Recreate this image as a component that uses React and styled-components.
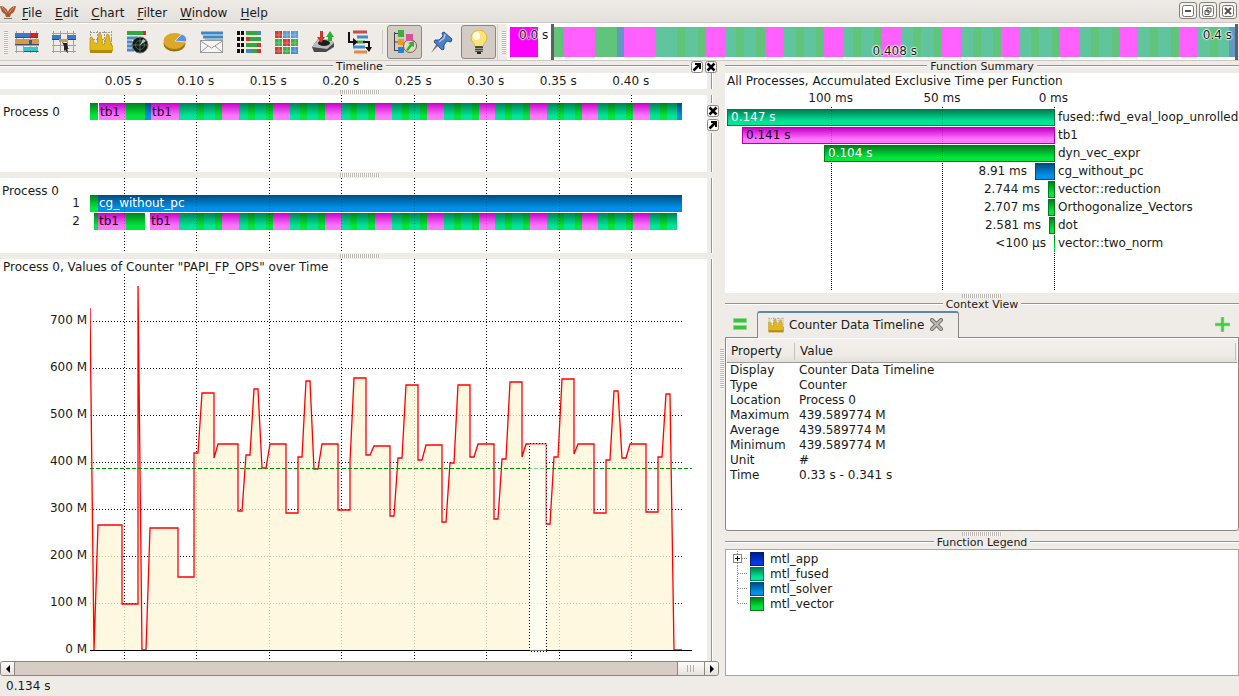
import React from 'react';
import styled, { createGlobalStyle, css } from 'styled-components';

const GlobalStyle = createGlobalStyle`
  *, *::before, *::after { box-sizing: border-box; }
  body {
    margin: 0;
    background: #efebe7;
    color: #1a1a1a;
    font-family: "DejaVu Sans", Verdana, sans-serif;
    font-size: 12px;
    line-height: 14px;
  }
  h2, ul, table { margin: 0; padding: 0; font: inherit; }
  ul { list-style: none; }
  button { font: inherit; color: inherit; margin: 0; padding: 0; border: 0; background: none; }
`;

/* ---------- data ---------- */

const fills = {
  green: 'linear-gradient(#00801a, #00e63c 75%)',
  teal: 'linear-gradient(#008055, #00e696 75%)',
  pink: 'linear-gradient(#c800c8, #ff78ff 75%)',
  blue: 'linear-gradient(#004d80, #0090ea 75%)',
  navy: 'linear-gradient(#001e80, #0038ea 75%)',
};

const edges = { green: '#007c1c', teal: '#007a52', pink: '#b400b4', blue: '#004a7c', navy: '#001c78' };

const pale = { green: '#60c47a', teal: '#60c49f', pink: '#ff60ff', blue: '#609ac4', gap: '#60c47a' };

// One solver iteration: a tb1 block followed by vector kernels of alternating kind.
const loop = [
  [17, 9], [17, 10], [16, 9], [17, 10], [17, 10], [16, 10], [17, 10], [16, 10],
].flatMap(([tb, kernel]) => [['pink', tb], ['teal', kernel], ['green', 7], ['teal', 11], ['green', 7]]);

const iterations = [
  ['teal', 18], ['green', 7], ['teal', 11], ['green', 7],
  ...loop,
  ['pink', 17], ['teal', 10], ['green', 7], ['teal', 10],
];

const processRow = [
  ['green', 8], ['gap', 1], ['pink', 27, 'tb1'], ['green', 19], ['blue', 6], ['pink', 28, 'tb1'],
  ...iterations, ['blue', 5],
];
const levelOne = [['green', 8], ['blue', 584, 'cg_without_pc', true]];
const levelTwo = [
  ['gap', 4], ['green', 4], ['pink', 28, 'tb1'], ['green', 19], ['gap', 5], ['pink', 29, 'tb1'],
  ...iterations, ['gap', 5],
];

const ticks = ['0.05 s', '0.10 s', '0.15 s', '0.20 s', '0.25 s', '0.30 s', '0.35 s', '0.40 s'];
const tickX = [124, 196, 269, 341, 414, 486, 559, 631];
const counterTicks = ['700 M', '600 M', '500 M', '400 M', '300 M', '200 M', '100 M', '0 M'];

const counter =
  '90,308 92,480 94,650 98,525 122,525 122,604 138,604 138,286 142,650 146,650 150,528 178,528 178,577 194,577 194,453 198,453 202,393 214,393 214,458 218,444 238,444 238,511 242,511 246,455 250,455 254,389 258,389 262,468 266,468 270,444 286,444 286,513 298,513 298,457 302,457 306,381 310,381 314,469 318,469 322,444 338,444 338,510 350,510 350,462 354,378 366,378 366,455 370,455 374,446 390,446 390,516 394,516 398,458 402,458 406,385 418,385 418,460 422,460 426,445 442,445 442,522 446,522 450,463 454,463 458,385 470,385 470,457 474,457 478,444 494,444 494,519 498,519 502,459 506,459 510,382 522,382 522,457 526,444 546,444 546,524 550,524 554,457 558,457 562,379 574,379 574,454 578,444 594,444 594,513 606,513 606,460 610,460 614,391 618,391 622,458 626,458 630,444 646,444 646,512 658,512 658,457 662,457 666,394 670,394 674,650 682,650';

const functions = [
  { name: 'fused::fwd_eval_loop_unrolled', value: '0.147 s', span: 328, color: 'teal', light: true },
  { name: 'tb1', value: '0.141 s', span: 313, color: 'pink' },
  { name: 'dyn_vec_expr', value: '0.104 s', span: 231, color: 'green', light: true },
  { name: 'cg_without_pc', value: '8.91 ms', span: 20, color: 'blue' },
  { name: 'vector::reduction', value: '2.744 ms', span: 7, color: 'green' },
  { name: 'Orthogonalize_Vectors', value: '2.707 ms', span: 7, color: 'green' },
  { name: 'dot', value: '2.581 ms', span: 6, color: 'green' },
  { name: 'vector::two_norm', value: '<100 µs', span: 1, color: 'green' },
];

const properties = [
  ['Display', 'Counter Data Timeline'],
  ['Type', 'Counter'],
  ['Location', 'Process 0'],
  ['Maximum', '439.589774 M'],
  ['Average', '439.589774 M'],
  ['Minimum', '439.589774 M'],
  ['Unit', '#'],
  ['Time', '0.33 s - 0.341 s'],
];

const legend = [
  ['mtl_app', 'navy'],
  ['mtl_fused', 'teal'],
  ['mtl_solver', 'blue'],
  ['mtl_vector', 'green'],
];

/* ---------- window frame ---------- */

const Window = styled.div`
  min-height: 100vh;
  display: flex;
  flex-direction: column;
`;

const MenuBar = styled.nav`
  height: 23px;
  display: flex;
  align-items: center;
  padding-right: 2px;
  border-bottom: 1px solid #cdc9c5;
  background: linear-gradient(#efebe7, #e4e0db);
`;

const Logo = styled.svg`
  width: 16px;
  height: 16px;
  flex: none;
`;

const MenuItem = styled.button`
  padding: 4px 0 0;
  margin-left: ${(p) => (p.$first ? 6 : 13)}px;
`;

const Mnemonic = styled.span`
  text-decoration: underline;
  text-underline-offset: 2px;
`;

const WindowButtons = styled.div`
  display: flex;
  gap: 2px;
  align-self: flex-start;
  margin: 2px 0 0 auto;
`;

const WindowButton = styled.button`
  width: 18px;
  height: 17px;
  display: grid;
  place-items: center;
  border: 1px solid #85817c;
  border-radius: 3px;
  background: #f4f1ee;
`;

const ToolBar = styled.div`
  height: 38px;
  display: flex;
  border-top: 1px solid #fff;
  border-bottom: 1px solid #cdc9c5;
`;

const ToolGroup = styled.div`
  display: flex;
  align-items: center;
  padding-left: 4px;
  border-right: ${(p) => (p.$last ? 0 : 1)}px solid #d5d1cc;
`;

const Handle = styled.span`
  width: 4px;
  height: 23px;
  flex: none;
  background: repeating-linear-gradient(#b9b5b0 0 1px, #fbfaf9 1px 2px);
`;

const Tool = styled.button`
  width: 35px;
  height: 34px;
  margin: 0 1px;
  display: grid;
  place-items: center;
  border-radius: 3px;
  ${(p) => p['aria-pressed'] && css`
    background: #d2ccc5;
    border: 1px solid #8c8782;
  `}
  svg { width: 24px; height: 24px; }
`;

const ToolSeparator = styled.span`
  width: 1px;
  height: 24px;
  margin: 0 3px 0 4px;
  background: #cfcbc6;
`;

const Main = styled.main`
  flex: 1;
  display: grid;
  grid-template-columns: minmax(0, 719fr) 6px minmax(0, 514fr);
`;

const Column = styled.div`
  display: flex;
  flex-direction: column;
  min-width: 0;
`;

const StatusBar = styled.footer`
  height: 20px;
  padding: 3px 6px;
`;

const Grip = styled.div`
  ${(p) => (p.$vertical ? css`
    width: 4px;
    height: 40px;
    background: repeating-linear-gradient(#bcb8b3 0 1px, #fbfaf9 1px 2px);
  ` : css`
    width: 40px;
    height: 4px;
    background: repeating-linear-gradient(90deg, #bcb8b3 0 1px, #fbfaf9 1px 2px);
  `)}
`;

const Splitter = styled.div`
  height: ${(p) => (p.$vertical ? 'auto' : '6px')};
  display: flex;
  align-items: center;
  justify-content: center;
`;

/* ---------- dock titles ---------- */

const TitleRow = styled.div`
  height: 12px;
  flex: none;
  display: grid;
  grid-template-columns: 1fr auto 1fr;
  column-gap: 3px;
`;

const Title = styled.h2`
  font-size: 11px;
  line-height: 11px;
`;

const Rule = styled.div`
  flex: 1;
  height: 2px;
  margin-top: 4px;
  background: linear-gradient(#96928e 50%, #fff 50%);
`;

const TitleEnd = styled.div`
  display: flex;
  gap: 2px;
  padding-right: ${(p) => (p.$tools ? 2 : 0)}px;
`;

const DockButton = styled.button`
  width: 12px;
  height: 12px;
  flex: none;
  display: block;
  svg { display: block; }
`;

/* ---------- timeline panels ---------- */

const PanelRow = styled.div`
  display: grid;
  grid-template-columns: minmax(0, 1fr) 12px;
  flex: ${(p) => (p.$grow ? 1 : 'none')};
  min-height: ${(p) => p.$height}px;
`;

const Panel = styled.section`
  position: relative;
  background: #fff;
`;

const Side = styled.div`
  display: flex;
  flex-direction: column;
  gap: 2px;
`;

const SideRule = styled.div`
  width: 2px;
  margin-left: 4px;
  flex: ${(p) => (p.$short ? '0 0 8px' : 1)};
  background: linear-gradient(90deg, #96928e 50%, #fff 50%);
`;

const Axis = styled.div`
  display: flex;
  padding: 1px 40px 0 87px;
  span { flex: 1; text-align: center; }
`;

const TrackGrid = styled.svg`
  position: absolute;
  top: 0;
  left: 90px;
  width: calc(100% - 115px);
  height: 100%;
  opacity: ${(p) => (p.$over ? 0.2 : 1)};
  pointer-events: none;
`;

const Lane = styled.div`
  position: relative;
  display: flex;
  height: 17px;
  margin: 0 25px 1px 0;
  line-height: ${(p) => (p.$low ? 19 : 17)}px;
`;

const LaneLabel = styled.div`
  width: 90px;
  flex: none;
  padding: 0 10px 0 3px;
  text-align: ${(p) => (p.$right ? 'right' : 'left')};
`;

const PanelPad = styled.div`
  padding-top: 8px;
`;

const LevelHeading = styled.div`
  height: 17px;
  padding: 6px 0 0 2px;
`;

const Track = styled.div`
  flex: 1;
  min-width: 0;
  display: flex;
`;

const Segment = styled.div`
  flex: ${(p) => p.$span} 1 0;
  min-width: 0;
  text-indent: ${(p) => (p.$text ? 1 : 0)}px;
  background: ${(p) => fills[p.$color] || 'none'};
  color: ${(p) => (p.$light ? '#fff' : '#1a001a')};
  white-space: nowrap;
`;

/* ---------- counter chart ---------- */

const ChartBody = styled.div`
  display: grid;
  grid-template-columns: 90px minmax(0, 1fr);
`;

const ChartTitle = styled.div`
  grid-area: 1 / 1 / 2 / 3;
  justify-self: start;
  align-self: start;
  z-index: 1;
  padding: 1px 0 0 3px;
  background: #fff;
`;

const ChartLabels = styled.div`
  grid-area: 1 / 1;
  padding: 38px 3px 0 0;
  line-height: 47px;
  text-align: right;
  height: 402px;
  overflow: hidden;
`;

const Plot = styled.svg`
  grid-area: 1 / 2;
  display: block;
  width: calc(100% - 15px);
  height: 402px;
`;

/* ---------- scroll bar ---------- */

const ScrollBar = styled.div`
  height: 15px;
  display: flex;
  border: 1px solid #8c8681;
  border-radius: 3px;
  background: #d7cdc4;
  overflow: hidden;
`;

const ScrollButton = styled.button`
  width: 14px;
  display: grid;
  place-items: center;
  background: linear-gradient(#fdfcfb, #e6e2dd);
  border: solid #8c8681;
  border-width: ${(p) => (p.$end ? '0 0 0 1px' : '0 1px 0 0')};
`;

const ScrollThumb = styled.div`
  width: 27px;
  margin-left: auto;
  display: grid;
  place-items: center;
  background: linear-gradient(#fdfcfb, #e6e2dd);
  border-left: 1px solid #8c8681;
`;

/* ---------- overview strip ---------- */

const Overview = styled.div`
  position: relative;
  flex: 1;
  display: flex;
  margin: 0 1px 0 1px;
  padding-left: 3px;
  background: #fff;
`;

const OverviewHead = styled.div`
  width: 28px;
  margin: 3px 13px 3px 0;
  background: #f0f;
`;

const OverviewEdge = styled.div`
  width: 3px;
  background: #606060;
`;

const OverviewTrack = styled.div`
  flex: 1;
  display: flex;
  margin: 3px 0;
`;

const OverviewSegment = styled.div`
  flex: ${(p) => p.$span} 1 0;
  background: ${(p) => pale[p.$color]};
`;

const OverviewLabel = styled.span`
  position: absolute;
  ${(p) => p.$place}
  text-shadow: 0 0 2px #fff, 1px 0 1px #ffffffb0, -1px 0 1px #ffffffb0, 0 1px 1px #ffffffb0, 0 -1px 1px #ffffffb0;
`;

/* ---------- function summary ---------- */

const Summary = styled.section`
  position: relative;
  min-height: 220px;
  padding-top: 1px;
  background: #fff;
`;

const SummaryTitle = styled.div`
  padding-left: 2px;
`;

const SummaryAxis = styled.div`
  display: flex;
  margin: 3px 130px 4px 50px;
  span { flex: 1; text-align: center; }
`;

const SummaryGrid = styled.svg`
  position: absolute;
  top: 34px;
  left: 0;
  width: calc(100% - 184px);
  height: 184px;
  opacity: ${(p) => (p.$over ? 0.2 : 1)};
  pointer-events: none;
`;

const FunctionRow = styled.li`
  position: relative;
  display: grid;
  grid-template-columns: minmax(0, 1fr) 184px;
  height: 17px;
  margin-bottom: 1px;
  line-height: 16px;
  white-space: nowrap;
`;

const FunctionTrack = styled.div`
  display: flex;
  justify-content: flex-end;
`;

const FunctionBar = styled.div`
  width: ${(p) => (p.$span / 330) * 100}%;
  padding-left: ${(p) => (p.$span > 100 ? 3 : 0)}px;
  line-height: 14px;
  border: ${(p) => (p.$span > 1 ? 1 : 0)}px solid ${(p) => edges[p.$color]};
  background: ${(p) => fills[p.$color]};
  color: ${(p) => (p.$light ? '#fff' : '#1a001a')};
`;

const FunctionValue = styled.span`
  padding-right: 8px;
`;

const FunctionName = styled.span`
  padding-left: 3px;
`;

/* ---------- context view ---------- */

const TabRow = styled.div`
  height: 27px;
  display: flex;
  margin-bottom: -1px;
`;

const TabTool = styled.button`
  width: 32px;
  display: flex;
  align-items: flex-start;
  padding: 6px 0 0 8px;
  svg { display: block; }
  ${(p) => p.$end && css`
    margin-left: auto;
    width: 24px;
    padding-left: 0;
  `}
`;

const Tab = styled.div`
  position: relative;
  width: 202px;
  display: flex;
  align-items: center;
  padding: 0 0 2px 10px;
  border: 1px solid #8c8681;
  border-top: 2px solid #5c88b0;
  border-bottom: 0;
  border-radius: 3px 3px 0 0;
  background: #efebe7;
  button { display: flex; }
`;

const TabLabel = styled.span`
  margin: 0 6px 0 5px;
`;

const ContextBox = styled.div`
  height: 194px;
  padding: 1px;
  border: 1px solid #8c8681;
  border-radius: 0 0 3px 3px;
  background: #fff;
`;

const PropertyTable = styled.table`
  width: 100%;
  border-collapse: separate;
  border-spacing: 0;
  table-layout: fixed;
  th {
    height: 24px;
    padding: 0 0 0 4px;
    font-weight: normal;
    text-align: left;
    border-bottom: 1px solid #9f9b96;
    background: linear-gradient(#f2efec, #efebe7 70%, #e2deda);
  }
  th span {
    display: block;
    margin: 3px 1px 2px 0;
    line-height: 17px;
    border-right: 1px solid #c4c0bb;
  }
  th:first-child { width: 69px; }
  td { height: 15px; line-height: 15px; padding: 0 0 0 3px; }
`;

/* ---------- legend ---------- */

const LegendBox = styled.ul`
  flex: 1;
  padding: 1px 0 0 7px;
  border: 1px solid #aaa6a1;
  background: #fff;
`;

const LegendRow = styled.li`
  height: 15px;
  display: flex;
  align-items: center;
  svg { display: block; flex: none; }
`;

const Swatch = styled.span`
  width: 14px;
  height: 14px;
  margin: 0 6px 0 3px;
  border: 1px solid ${(p) => edges[p.$color]};
  background: ${(p) => fills[p.$color]};
`;

/* ---------- icons ---------- */

const GridBack = () => (
  <path d="M1.5 1v22M8.5 1v22M15.5 1v22M21.5 1v22M0 3.5h24M0 9.5h24M0 15.5h24M0 21.5h24" stroke="#a2a2a2" fill="none" />
);

const TimelineIcon = () => (
  <svg viewBox="0 0 24 24">
    <GridBack />
    <rect x="0" y="3" width="15" height="4" fill="#3f78c8" /><rect x="15" y="3" width="8" height="4" fill="#d8202c" />
    <rect x="0" y="10" width="24" height="4" fill="#d89a48" /><rect x="14" y="10" width="3" height="4" fill="#2c5fa8" />
    <rect x="9" y="17" width="14" height="4" fill="#35c6c9" />
    <path d="M0 7.5h23M0 14.5h24M9 21.5h14" stroke="#39506e" />
  </svg>
);

const ProcessIcon = () => (
  <svg viewBox="0 0 24 24">
    <GridBack />
    <rect x="0" y="5" width="9" height="4" fill="#3f78c8" /><rect x="15" y="5" width="9" height="4" fill="#3f78c8" />
    <path d="M0 9.5h9M15 9.500h9" stroke="#294a7c" />
    <rect x="7" y="9" width="9" height="3" fill="#d89a48" />
    <path d="M10 12l2 1 3 0 1 5 1 1-2 0 1 4-3-3-1 1v-5z" fill="#222" />
  </svg>
);

const CounterShape = () => (
  <>
    <path d="M1.5 1v22M8.5 1v22M15.5 1v22M22.5 1v22M1 2.5h22M1 9.5h22M1 15.5h22M1 21.5h22" stroke="#999" fill="none" strokeDasharray="2 1" />
    <path d="M1 21V8l2-1 2 5 3 2 2-11 2 1 2 10 1 1 3-11 2 1 2 10 2 1v5z" fill="#e3b81b" stroke="#b8900c" strokeWidth=".7" />
    <path d="M1 20h22v3H1z" fill="#b58a08" />
  </>
);

const CounterIcon = () => <svg viewBox="0 0 24 24"><CounterShape /></svg>;

const RadarIcon = () => (
  <svg viewBox="0 0 24 24">
    <rect x="1" y="1" width="19" height="4" fill="#2fa83c" /><rect x="17" y="1" width="3" height="4" fill="#c33" />
    <path d="M1 8h11M1 12h5M1 16h5M1 20h7" stroke="#4b86c6" strokeWidth="3" />
    <circle cx="14" cy="15" r="8" fill="#101a14" stroke="#777" />
    <circle cx="14" cy="15" r="4.5" fill="none" stroke="#5d7767" strokeWidth=".7" />
    <path d="M14 15L20 9M14 8v14M7 15h14" stroke="#6d8a78" strokeWidth=".7" /><path d="M14 15l3-6 3 2z" fill="#d5e6da" opacity=".8" />
  </svg>
);

const PieIcon = () => (
  <svg viewBox="0 0 24 24">
    <ellipse cx="11.500" cy="13.500" rx="11" ry="8" fill="#9b7510" />
    <ellipse cx="11.500" cy="11" rx="11" ry="8" fill="#dca82a" />
    <path d="M12 11L19 4a9 7 0 0 1 4 8z" fill="#5c8ff0" stroke="#e8eefc" strokeWidth=".8" />
  </svg>
);

const MailIcon = () => (
  <svg viewBox="0 0 24 24">
    <path d="M1 3h22M3 7h20M5 11h18M12 15h11" stroke="#3a8ac8" strokeWidth="3" />
    <rect x=".5" y="10.500" width="22" height="12" fill="#f5f5f3" stroke="#999" />
    <path d="M.500 11l11 7 11-7M1 22l7-6M22 22l-7-6" fill="none" stroke="#999" />
  </svg>
);

const CommIcon = () => (
  <svg viewBox="0 0 24 24">
    {[1, 7, 13, 19].map((y, i) => (
      <g key={y}>
        <rect x="0" y={y} width="3" height="4" fill="#111" /><rect x="4" y={y} width="3" height="4" fill="#111" />
        <rect x="9" y={y} width="15" height="4" fill="#35a53f" />
        <rect x={i === 1 ? 9 : 20} y={y} width="4" height="4" fill={i === 0 ? '#4b86c6' : '#cc3a33'} />
        {i === 3 && <rect x="9" y={y} width="5" height="4" fill="#4b86c6" />}
      </g>
    ))}
  </svg>
);

const MatrixIcon = () => {
  const cells = ['#cf3c36', '#5b9bd0', '#5b9bd0', '#3eae49', '#cf3c36', '#3eae49', '#cf3c36', '#3eae49', '#4a8cd0'];
  return (
    <svg viewBox="0 0 24 24">
      {cells.map((c, i) => (
        <rect key={i} x={1 + (i % 3) * 8} y={1 + Math.floor(i / 3) * 8} width="7" height="7" fill={c} />
      ))}
      <path d="M1 5h22M1 13h22M1 21h22M5 1v22M13 1v22M21 1v22" stroke="#fff" opacity=".3" />
    </svg>
  );
};

const DiskIcon = () => (
  <svg viewBox="0 0 24 24">
    <path d="M1 17L7 9h12l4 4v4l-8 5H3z" fill="#4a4a4a" /><path d="M1 17l6-8h12l4 4-7 6z" fill="#bcbcbc" />
    <ellipse cx="13" cy="13" rx="6" ry="3" fill="#1e1e1e" />
    <path d="M9 1v6H6l4 6 4-6h-2V1z" fill="#c9392f" /><path d="M17 11V7h-2l4-6 4 6h-2v4z" fill="#2fae3c" />
  </svg>
);

const FilterIcon = () => (
  <svg viewBox="0 0 24 24">
    <path d="M5 2h14" stroke="#c94b45" strokeWidth="3" /><path d="M9 7h11" stroke="#3f8ad0" strokeWidth="3" />
    <path d="M9 12h8" stroke="#3fae49" strokeWidth="3" /><path d="M5 17h12" stroke="#3f8ad0" strokeWidth="3" /><path d="M6 22h13" stroke="#e08a4a" strokeWidth="3" />
    <path d="M1 2v10h5M15 12h6v7" fill="none" stroke="#111" strokeWidth="2" /><path d="M5 8l5 4-5 4zM17 17h7l-3 5z" fill="#111" />
  </svg>
);

const TreeIcon = () => (
  <svg viewBox="0 0 24 24">
    <path d="M1.500 2v19M1 3.500h5M1 12h5M1 20.500h5" stroke="#444" fill="none" />
    <rect x="5" y="0" width="6" height="7" fill="#3cae3c" /><rect x="5" y="9" width="6" height="6" fill="#f09a20" /><rect x="5" y="17" width="6" height="6" fill="#2f7fd0" />
    <circle cx="17" cy="16" r="6.500" fill="#e4dcc0" stroke="#6d654f" />
    <rect x="13" y="4" width="7" height="7" fill="#d850a0" />
    <path d="M13 20l4-6-2-1 6-2 0 6-2-1-4 5z" fill="#2fae3c" />
  </svg>
);

const PinIcon = () => (
  <svg viewBox="0 0 24 24">
    <path d="M9 15l-8 8 6-10z" fill="#777" />
    <path d="M14 2l8 7-1 3-4-1-3 4 0 4-2 1-8-8 1-2 4 0 4-4-1-3z" fill="#4d7fc4" stroke="#24487e" strokeWidth=".9" />
    <path d="M15 4l-1 4-5 4" stroke="#a9c6ee" fill="none" strokeWidth="1.500" />
  </svg>
);

const BulbIcon = () => (
  <svg viewBox="0 0 24 24">
    <path d="M12 0a8 8 0 0 1 8 8c0 4-4 5-4 9H8c0-4-4-5-4-9a8 8 0 0 1 8-8z" fill="#fbe37c" stroke="#d9b640" />
    <ellipse cx="9.500" cy="6" rx="3.500" ry="4" fill="#fffbe0" />
    <rect x="8" y="16" width="8" height="6" rx="1" fill="#4a4a4a" /><path d="M8 18.500h8M8 20.500h8" stroke="#999" /><path d="M10 22h4v2h-4z" fill="#222" />
  </svg>
);

const tools = [
  ['Master timeline', TimelineIcon], ['Process timeline', ProcessIcon], ['Counter timeline', CounterIcon],
  ['Performance radar', RadarIcon], ['Function summary', PieIcon], ['Message summary', MailIcon],
  ['Process summary', CommIcon], ['Communication matrix', MatrixIcon], ['I/O summary', DiskIcon], ['Call tree', FilterIcon],
];

const Close = () => (
  <DockButton aria-label="Close">
    <svg width="12" height="12" viewBox="0 0 12 12">
      <rect x=".5" y=".5" width="11" height="11" rx="2" fill="#fff" stroke="#8c8681" />
      <path d="M2.500 2.500l7 7M9.500 2.500l-7 7" stroke="#000" strokeWidth="2.500" />
    </svg>
  </DockButton>
);

const Detach = () => (
  <DockButton aria-label="Detach">
    <svg width="12" height="12" viewBox="0 0 12 12">
      <rect x=".5" y=".5" width="11" height="11" rx="2" fill="#fff" stroke="#8c8681" />
      <path d="M2.500 9.500L8 4" stroke="#000" strokeWidth="2.500" /><path d="M4 2h6v6H8V4H4z" fill="#000" />
    </svg>
  </DockButton>
);

/* ---------- composed parts ---------- */

const DockTitle = ({ children, tools: withTools }) => (
  <TitleRow>
    <Rule />
    <Title>{children}</Title>
    <TitleEnd $tools={withTools}>
      <Rule />
      {withTools && <><Detach /><Close /></>}
    </TitleEnd>
  </TitleRow>
);

const Divider = () => <Splitter><Grip /></Splitter>;

const TimeGrid = ({ over }) => (
  <TrackGrid $over={over} aria-hidden="true">
    {tickX.map((x) => {
      const at = `${((x - 89.5) / 592) * 100}%`;
      return <line key={x} x1={at} x2={at} y1="0" y2="100%" stroke="#000" strokeDasharray="1 2" shapeRendering="crispEdges" />;
    })}
  </TrackGrid>
);

const Segments = ({ row }) => (
  <Track>
    {row.map(([color, span, text, light], i) => (
      <Segment key={i} $color={color} $span={span} $text={text} $light={light}>{text}</Segment>
    ))}
  </Track>
);

const ValueGrid = ({ over }) => (
  <SummaryGrid $over={over} aria-hidden="true">
    {[106.5, 217.5, 329.5].map((x) => (
      <line key={x} x1={`${x / 3.3}%`} x2={`${x / 3.3}%`} y1="0" y2="100%" stroke="#000" strokeDasharray="1 1" shapeRendering="crispEdges" />
    ))}
  </SummaryGrid>
);

const CounterPlot = () => (
  <Plot viewBox="90 259 602 402" preserveAspectRatio="none" role="img" aria-label="PAPI_FP_OPS over time">
    <g stroke="#000" strokeDasharray="1 2" shapeRendering="crispEdges">
      {tickX.map((x) => <line key={x} x1={x + 0.5} x2={x + 0.5} y1="259" y2="660" />)}
      {[321, 368, 415, 462, 509, 556, 603].map((y) => <line key={y} x1="90" x2="682" y1={y + 0.5} y2={y + 0.5} />)}
    </g>
    <polygon points={`90,650 ${counter} 682,650`} fill="#fff6d8" fillOpacity=".8" />
    <polyline points={counter} fill="none" stroke="#f00" strokeWidth="1.3" />
    <line x1="90" x2="692" y1="650.5" y2="650.5" stroke="#000" shapeRendering="crispEdges" />
    <line x1="90" x2="692" y1="468.5" y2="468.5" stroke="#009200" strokeDasharray="4 2" shapeRendering="crispEdges" />
    <rect x="529.500" y="443.500" width="17" height="208" fill="#fff" fillOpacity=".5" />
    <rect x="529.500" y="443.500" width="17" height="208" fill="none" stroke="#000" strokeDasharray="1 2" shapeRendering="crispEdges" />
  </Plot>
);

export default function App() {
  return (
    <Window>
      <GlobalStyle />
      <MenuBar>
        <Logo viewBox="0 0 16 16" aria-hidden="true">
          <path d="M0 3c4 0 7 3 8 6 1-3 4-6 8-6-1 4-2 7-5 8l-1 3H6l-1-3C2 10 1 7 0 3z" fill="#a8572c" />
          <path d="M2 4l5 6M14 4l-5 6" stroke="#e0a070" /><path d="M4 15h8v1H4z" fill="#777" />
        </Logo>
        {['File', 'Edit', 'Chart', 'Filter', 'Window', 'Help'].map((item, i) => (
          <MenuItem key={item} $first={i === 0}><Mnemonic>{item[0]}</Mnemonic>{item.slice(1)}</MenuItem>
        ))}
        <WindowButtons>
          <WindowButton aria-label="Minimize">
            <svg width="12" height="12" viewBox="0 0 12 12"><rect x=".5" y=".5" width="11" height="11" rx="2" fill="#fff" stroke="#77736e" /><path d="M3 6h6" stroke="#55514d" strokeWidth="2" /></svg>
          </WindowButton>
          <WindowButton aria-label="Restore">
            <svg width="12" height="12" viewBox="0 0 12 12"><rect x=".5" y=".5" width="11" height="11" rx="2" fill="#fff" stroke="#77736e" /><path d="M5 3h4v4H5zM3 5.500h4v4H3z" fill="#fff" stroke="#55514d" /></svg>
          </WindowButton>
          <WindowButton aria-label="Close window">
            <svg width="12" height="12" viewBox="0 0 12 12"><rect x=".5" y=".5" width="11" height="11" rx="2" fill="#fff" stroke="#77736e" /><path d="M3 3l6 6M9 3l-6 6" stroke="#55514d" strokeWidth="2" /></svg>
          </WindowButton>
        </WindowButtons>
      </MenuBar>

      <ToolBar>
        <ToolGroup>
          <Handle />
          {tools.map(([name, Icon]) => <Tool key={name} aria-label={name}><Icon /></Tool>)}
          <ToolSeparator />
          <Tool aria-label="Context view" aria-pressed="true"><TreeIcon /></Tool>
          <Tool aria-label="Pin"><PinIcon /></Tool>
          <Tool aria-label="Highlight" aria-pressed="true"><BulbIcon /></Tool>
        </ToolGroup>
        <ToolGroup $last><Handle /></ToolGroup>
        <Overview>
          <OverviewHead />
          <OverviewEdge />
          <OverviewTrack>
            {processRow.map(([color, span], i) => <OverviewSegment key={i} $color={color} $span={span} />)}
          </OverviewTrack>
          <OverviewEdge />
          <OverviewLabel $place="left: 12px; top: 4px;">0.0 s</OverviewLabel>
          <OverviewLabel $place="left: 50%; top: 20px;">0.408 s</OverviewLabel>
          <OverviewLabel $place="right: 6px; top: 4px;">0.4 s</OverviewLabel>
        </Overview>
      </ToolBar>

      <Main>
        <Column>
          <DockTitle tools>Timeline</DockTitle>
          <PanelRow $height={16}>
            <Panel><Axis>{ticks.map((t) => <span key={t}>{t}</span>)}</Axis></Panel>
            <Side><SideRule /></Side>
          </PanelRow>
          <Divider />
          <PanelRow $height={77}>
            <Panel>
              <TimeGrid />
              <PanelPad>
                <Lane $low><LaneLabel>Process 0</LaneLabel><Segments row={processRow} /></Lane>
              </PanelPad>
              <TimeGrid over />
            </Panel>
            <Side><SideRule $short /><Close /><Detach /><SideRule /></Side>
          </PanelRow>
          <Divider />
          <PanelRow $height={75}>
            <Panel>
              <TimeGrid />
              <LevelHeading>Process 0</LevelHeading>
              <Lane><LaneLabel $right>1</LaneLabel><Segments row={levelOne} /></Lane>
              <Lane><LaneLabel $right>2</LaneLabel><Segments row={levelTwo} /></Lane>
              <TimeGrid over />
            </Panel>
            <Side><SideRule /></Side>
          </PanelRow>
          <Divider />
          <PanelRow $height={402} $grow>
            <Panel>
              <ChartBody>
                <ChartTitle>Process 0, Values of Counter "PAPI_FP_OPS" over Time</ChartTitle>
                <ChartLabels>{counterTicks.map((t) => <div key={t}>{t}</div>)}</ChartLabels>
                <CounterPlot />
              </ChartBody>
            </Panel>
            <Side><SideRule /></Side>
          </PanelRow>
          <ScrollBar>
            <ScrollButton aria-label="Scroll left"><svg width="6" height="8"><path d="M5 0v8L1 4z" /></svg></ScrollButton>
            <ScrollThumb><svg width="8" height="7"><path d="M.5 0v7M3.500 0v7M6.500 0v7" stroke="#b5b0ab" /></svg></ScrollThumb>
            <ScrollButton $end aria-label="Scroll right"><svg width="6" height="8"><path d="M1 0v8l4-4z" /></svg></ScrollButton>
          </ScrollBar>
        </Column>

        <Splitter $vertical><Grip $vertical /></Splitter>

        <Column>
          <DockTitle>Function Summary</DockTitle>
          <Summary>
            <ValueGrid />
            <SummaryTitle>All Processes, Accumulated Exclusive Time per Function</SummaryTitle>
            <SummaryAxis><span>100 ms</span><span>50 ms</span><span>0 ms</span></SummaryAxis>
            <ul>
              {functions.map((f) => (
                <FunctionRow key={f.name}>
                  <FunctionTrack>
                    {f.span <= 100 && <FunctionValue>{f.value}</FunctionValue>}
                    <FunctionBar $span={f.span} $color={f.color} $light={f.light}>{f.span > 100 && f.value}</FunctionBar>
                  </FunctionTrack>
                  <FunctionName>{f.name}</FunctionName>
                </FunctionRow>
              ))}
            </ul>
            <ValueGrid over />
          </Summary>
          <Divider />
          <DockTitle>Context View</DockTitle>
          <TabRow>
            <TabTool aria-label="Tab list">
              <svg width="14" height="14" viewBox="0 0 14 14"><rect x=".5" y="1.500" width="13" height="4" fill="#35c43a" stroke="#8fd98f" /><rect x=".5" y="8.500" width="13" height="4" fill="#35c43a" stroke="#8fd98f" /></svg>
            </TabTool>
            <Tab>
              <svg width="16" height="16" viewBox="0 0 24 24"><CounterShape /></svg>
              <TabLabel>Counter Data Timeline</TabLabel>
              <button aria-label="Close tab">
                <svg width="13" height="13" viewBox="0 0 13 13"><path d="M2 2l9 9M11 2l-9 9" stroke="#77746f" strokeWidth="4" strokeLinecap="round" /><path d="M2 2l9 9M11 2l-9 9" stroke="#bcb9b5" strokeWidth="2" strokeLinecap="round" /></svg>
              </button>
            </Tab>
            <TabTool $end aria-label="Add tab">
              <svg width="15" height="15" viewBox="0 0 15 15"><path d="M6 0h3v6h6v3H9v6H6V9H0V6h6z" fill="#3fd03f" stroke="#9fe39f" strokeWidth=".6" /></svg>
            </TabTool>
          </TabRow>
          <ContextBox>
            <PropertyTable>
              <thead><tr><th scope="col"><span>Property</span></th><th scope="col"><span>Value</span></th></tr></thead>
              <tbody>
                {properties.map(([k, v]) => <tr key={k}><td>{k}</td><td>{v}</td></tr>)}
              </tbody>
            </PropertyTable>
          </ContextBox>
          <Divider />
          <DockTitle>Function Legend</DockTitle>
          <LegendBox>
            {legend.map(([name, color], i) => (
              <LegendRow key={name}>
                <svg width="14" height="15" shapeRendering="crispEdges" aria-hidden="true">
                  <path d={`M4.500 0V${i === 3 ? 8 : 15}M5 7.500h9`} stroke="#8a8a8a" strokeDasharray="1 1" fill="none" />
                  {i === 0 && <><rect x=".5" y="3.500" width="8" height="8" fill="#fff" stroke="#8a8681" /><path d="M2 7.500h5M4.500 5v5" stroke="#000" /></>}
                </svg>
                <Swatch $color={color} />
                {name}
              </LegendRow>
            ))}
          </LegendBox>
        </Column>
      </Main>

      <StatusBar>0.134 s</StatusBar>
    </Window>
  );
}
